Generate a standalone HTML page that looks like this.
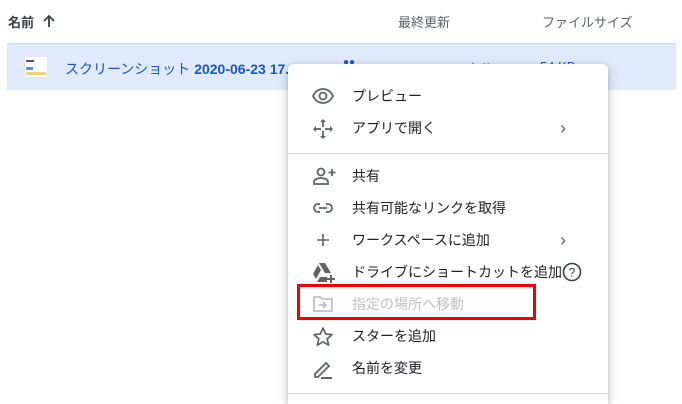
<!DOCTYPE html>
<html style="overflow:hidden;width:682px;height:404px"><head><meta charset="utf-8"><style>
*{margin:0;padding:0;box-sizing:border-box}
body{width:682px;height:404px;overflow:hidden;background:#fff;font-family:"Liberation Sans","Noto Sans CJK JP",sans-serif;position:relative;color:#202124}
.abs{position:absolute;white-space:nowrap}
.hdr{font-size:13px;color:#5f6368;top:12px}
.row{position:absolute;left:7px;top:43px;width:669px;height:47px;background:#e1eafb;border-top:1px solid #d3d8df}
.menu{position:absolute;left:288px;top:64px;width:320px;height:340px;background:#fff;border-radius:6px 6px 0 0;box-shadow:0 2px 6px rgba(60,64,67,.3),0 4px 14px rgba(60,64,67,.15)}
.it{position:absolute;left:0;width:320px;height:32px;font-size:14px;line-height:32px}
.it span{position:absolute;left:64px}
.it svg{position:absolute;left:24px;top:6px}
.chev{position:absolute;left:272px;top:0;color:#5f6368;font-size:18px}
.div{position:absolute;left:0;width:320px;height:1px;background:#dadce0}
</style></head><body>
<div class="abs hdr" style="left:8px;color:#3c4043;font-weight:600">名前</div>
<svg class="abs" style="left:42px;top:14px" width="14" height="14" viewBox="0 0 14 14"><path d="M7 13V2M2 7l5-5 5 5" stroke="#3c4043" stroke-width="1.8" fill="none"/></svg>
<div class="abs hdr" style="left:398px">最終更新</div>
<div class="abs hdr" style="left:542px">ファイルサイズ</div>
<div class="row"></div>
<div class="abs" style="left:24px;top:56px;width:24px;height:22px;background:#fff;border:1px solid #e6e6e6">
<div style="position:absolute;left:1px;top:3px;width:8px;height:2px;background:#555"></div>
<div style="position:absolute;left:1px;top:10px;width:7px;height:3px;background:#5b8def"></div>
<div style="position:absolute;left:1px;top:15px;width:20px;height:3px;background:#f0d27a"></div></div>
<div class="abs" style="left:65px;top:59px;font-size:14px;color:#1a56c8">スクリーンショット <b style="font-weight:600">2020-06-23 17.45.47</b></div>
<div class="abs" style="left:343px;top:57px;font-size:10px;color:#1a56c8">●●</div>
<div class="abs" style="left:398px;top:59px;font-size:13px;color:#1a56c8">2020/06/23 自分</div>
<div class="abs" style="left:540px;top:59px;font-size:13px;color:#1a56c8">54 KB</div>
<div class="menu">
<div class="it" style="top:16px"><svg width="22" height="20" viewBox="0 0 22 20"><path d="M1 10C4 4 8 3 11 3s7 1 10 7c-3 6-7 7-10 7S4 16 1 10z" fill="none" stroke="#5f6368" stroke-width="1.8"/><circle cx="11" cy="10" r="3.5" fill="none" stroke="#5f6368" stroke-width="1.8"/></svg><span>プレビュー</span></div>
<div class="it" style="top:48px"><svg width="22" height="22" viewBox="0 0 22 22"><path d="M11 1l-3 3h6zM11 21l-3-3h6zM1 11l3-3v6zM21 11l-3-3v6z" fill="#5f6368"/><path d="M11 4v5M11 13v5M4 11h5M13 11h5" stroke="#5f6368" stroke-width="1.8"/></svg><span>アプリで開く</span><div class="chev">›</div></div>
<div class="div" style="top:89px"></div>
<div class="it" style="top:96px"><svg width="24" height="20" viewBox="0 0 24 20"><circle cx="9" cy="6" r="3.5" fill="none" stroke="#5f6368" stroke-width="1.8"/><path d="M2 18v-2c0-3 5-4 7-4s7 1 7 4v2z" fill="none" stroke="#5f6368" stroke-width="1.8"/><path d="M20 3v7M16.5 6.5h7" stroke="#5f6368" stroke-width="1.8"/></svg><span>共有</span></div>
<div class="it" style="top:128px"><svg width="22" height="20" viewBox="0 0 22 20"><path d="M8 6H6a4 4 0 000 8h2M14 6h2a4 4 0 010 8h-2M7 10h8" fill="none" stroke="#5f6368" stroke-width="1.8"/></svg><span>共有可能なリンクを取得</span></div>
<div class="it" style="top:160px"><svg width="22" height="20" viewBox="0 0 22 20"><path d="M11 4v12M5 10h12" stroke="#5f6368" stroke-width="1.6"/></svg><span>ワークスペースに追加</span><div class="chev">›</div></div>
<div class="it" style="top:192px"><svg width="24" height="22" viewBox="0 0 24 22"><path d="M7 1h6l6 10h-6zM6 3l3 5-5 9-3-5zM5 20l3-5h7v5z" fill="#5f6368"/><path d="M19 13v8M15 17h8" stroke="#5f6368" stroke-width="2"/></svg><span>ドライブにショートカットを追加</span><svg style="left:274px;top:6px" width="20" height="20" viewBox="0 0 20 20"><circle cx="10" cy="10" r="8.5" fill="none" stroke="#3c4043" stroke-width="1.6"/><text x="10" y="14.5" font-size="12" text-anchor="middle" fill="#3c4043" font-family="Liberation Sans">?</text></svg></div>
<div class="it" style="top:224px;color:#bdc1c6"><svg width="22" height="20" viewBox="0 0 22 20"><path d="M2 3h6l2 2h10v12H2z" fill="none" stroke="#bdc1c6" stroke-width="1.8"/><path d="M7 11h7M11 8l3 3-3 3" fill="none" stroke="#bdc1c6" stroke-width="1.8"/></svg><span>指定の場所へ移動</span></div>
<div class="it" style="top:256px"><svg width="22" height="22" viewBox="0 0 22 22"><path d="M11 2l2.7 6 6.3.6-4.8 4.2 1.5 6.4L11 15.8 5.3 19.2l1.5-6.4L2 8.6 8.3 8z" fill="none" stroke="#5f6368" stroke-width="1.7" stroke-linejoin="round"/></svg><span>スターを追加</span></div>
<div class="it" style="top:288px"><svg width="22" height="22" viewBox="0 0 22 22"><path d="M3 19v-3L14 5l3 3L6 19z" fill="none" stroke="#5f6368" stroke-width="1.8"/><path d="M9 20h11" stroke="#5f6368" stroke-width="2"/></svg><span>名前を変更</span></div>
<div class="div" style="top:329px"></div>
</div>
<div class="abs" style="left:297px;top:284px;width:239px;height:36px;border:3px solid #ee0000"></div>
</body></html>
